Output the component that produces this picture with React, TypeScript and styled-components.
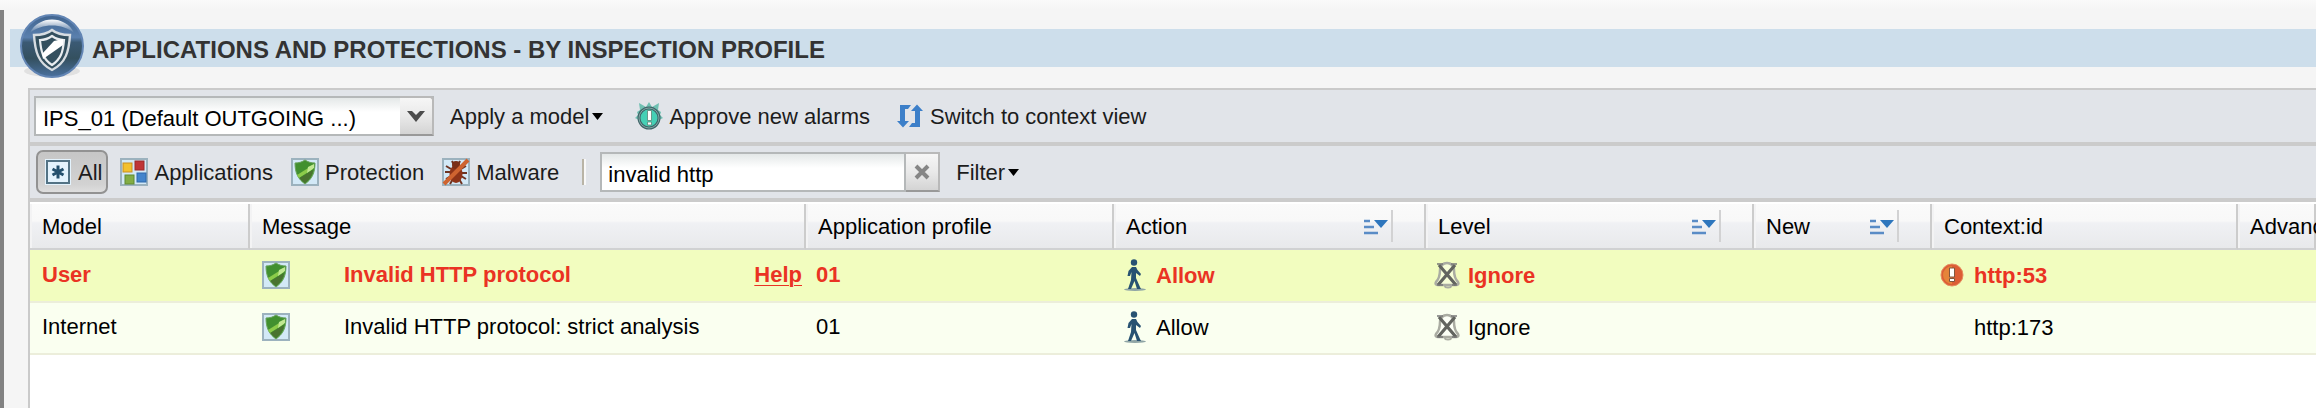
import React from 'react';
import styled, { createGlobalStyle, css } from 'styled-components';

const GlobalStyle = createGlobalStyle`
  *, *::before, *::after { box-sizing: border-box; }
  body {
    margin: 0;
    background: #f5f5f5;
    color: #000;
    font-family: "Liberation Sans", Arial, Helvetica, sans-serif;
    font-size: 22px;
    line-height: 26px;
  }
  button, input, select { font: inherit; color: inherit; }
  svg { display: block; flex: none; }
`;

const Page = styled.div`
  display: flex;
  flex-direction: column;
  min-height: 100vh;
  padding-top: 10px;
  overflow: hidden;
  background: linear-gradient(#fafafa, #f5f5f5 10px);
`;

const Frame = styled.div`
  display: flex;
  flex: 1;
  flex-direction: column;
  min-width: 0;
  border-left: 4px solid #828282;
`;

const TitleBar = styled.header`
  display: flex;
  align-items: center;
  gap: 8px;
  height: 72px;
  padding-left: 16px;
  background: linear-gradient(#cddeeb, #cddeeb) 6px 19px / 100% 38px no-repeat;
`;

const Title = styled.h1`
  margin: 0;
  padding-top: 7px;
  color: #333;
  font-size: 24px;
  line-height: 28px;
  white-space: nowrap;
`;

const Panel = styled.main`
  display: flex;
  flex: 1;
  flex-direction: column;
  min-width: 0;
  margin: 6px 0 0 24px;
  border: solid #cacaca;
  border-width: 2px 0 0 2px;
  background: #fff;
`;

const Toolbar = styled.div`
  display: flex;
  align-items: center;
  height: 56px;
  border-bottom: 4px solid #cbcbcb;
  background: #e1e4e9;
  color: #1c1c1c;
  white-space: nowrap;
`;

const MainToolbar = styled(Toolbar)`
  gap: 16px;
  padding-left: 4px;
`;

const FilterToolbar = styled(Toolbar)`
  gap: 4px;
  padding-left: 6px;
`;

const Label = styled.span`
  padding-top: 2px;
`;

const ToolButton = styled.button`
  display: flex;
  align-items: center;
  gap: 6px;
  height: 44px;
  padding: 0;
  border: 0;
  background: none;
`;

const MenuButton = styled(ToolButton)`
  gap: 3px;
`;

const ModelButton = styled(MenuButton)`
  margin-right: 16px;
`;

const SwitchButton = styled(ToolButton)`
  margin-left: 10px;
`;

const TypeButton = styled(ToolButton)<{ $active?: boolean }>`
  padding: 0 4px 0 6px;
  border: 2px solid transparent;
  border-radius: 7px;
  ${(p) =>
    p.$active &&
    css`
      border-color: #929292;
      background: linear-gradient(#c6c6c6, #d2d2d2 80%, #dedede);
    `}
`;

const fieldFace = css`
  height: 40px;
  border: 2px solid #b5b8b9;
  border-radius: 0;
  outline: none;
  background: linear-gradient(#e4e8e8, #fff 14px);
  color: #000;
`;

const raised = css`
  display: flex;
  align-items: center;
  justify-content: center;
  width: 34px;
  height: 40px;
  padding: 0;
  border: solid #b9b9b9;
  border-width: 2px 2px 2px 0;
  border-bottom-color: #999;
  background: linear-gradient(#f6f6f6, #e9e9e9 50%, #d4d4d4);
`;

const Combo = styled.div`
  display: grid;
  grid-template-columns: 366px 34px;
`;

const ProfileSelect = styled.select`
  ${fieldFace}
  grid-area: 1 / 1 / 2 / 3;
  width: 100%;
  padding: 5px 34px 0 7px;
  appearance: none;
`;

const ComboArrow = styled.span`
  ${raised}
  grid-area: 1 / 2;
  border-top-right-radius: 4px;
  pointer-events: none;
`;

const Divider = styled.span`
  width: 4px;
  height: 26px;
  margin: 0 10px 0 13px;
  border: solid;
  border-width: 0 2px;
  border-color: #b9b4a6 #f8f8f8 #f8f8f8 #b9b4a6;
`;

const Search = styled.div`
  display: flex;
  margin-right: 12px;
`;

const SearchInput = styled.input`
  ${fieldFace}
  width: 306px;
  padding: 5px 6px 0;
`;

const ClearButton = styled.button`
  ${raised}
`;

const Grid = styled.table`
  width: 100%;
  border-collapse: collapse;
  table-layout: fixed;
  white-space: nowrap;
`;

const Col = styled.col<{ $width?: number }>`
  width: ${(p) => (p.$width ? `${p.$width}px` : 'auto')};
`;

const HeadCell = styled.th`
  padding: 2px 0 0;
  overflow: hidden;
  font-weight: normal;
  text-align: left;
`;

const HeadFace = styled.div`
  display: flex;
  align-items: center;
  justify-content: space-between;
  height: 46px;
  padding-left: 12px;
  border-right: 2px solid #ccc;
  border-bottom: 2px solid #d0d1d2;
  box-shadow: inset 2px 0 #f3f3f4;
  background: linear-gradient(#fafafa, #f8f8f8 17px, #f0f1f4 19px, #e8e9eb);
`;

const SortButton = styled.button`
  height: 32px;
  margin-right: 31px;
  padding: 2px 2px 0 0;
  border: 0;
  border-right: 2px solid #d2d2d3;
  background: none;
`;

const Row = styled.tr<{ $custom?: boolean }>`
  height: 52px;
  border-bottom: 2px solid #eceedb;
  background: ${(p) => (p.$custom ? '#f2fdbf' : '#fafff0')};
  color: ${(p) => (p.$custom ? '#ea3323' : '#000')};
  font-weight: ${(p) => (p.$custom ? 'bold' : 'normal')};
`;

const Cell = styled.td<{ $inset?: number }>`
  padding: 0 4px 2px ${(p) => p.$inset ?? 12}px;
`;

const CellContent = styled.div<{ $gap: number }>`
  display: flex;
  align-items: center;
  gap: ${(p) => p.$gap}px;
`;

const IconSlot = styled.span`
  flex: none;
  width: 24px;
`;

const HelpLink = styled.a`
  margin-left: auto;
  color: inherit;
  text-decoration: underline;
  text-decoration-thickness: 1px;
  text-underline-offset: 3px;
`;

const Caret = () => (
  <svg width="11" height="7" viewBox="0 0 11 7" aria-hidden="true">
    <path d="M0 0h11L5.500 7z" fill="#000" />
  </svg>
);

const Badge = () => (
  <svg width="64" height="68" viewBox="0 0 64 68" aria-hidden="true">
    <defs>
      <linearGradient id="disc" x1="0" y1="0" x2="0" y2="1">
        <stop offset="0" stopColor="#40648f" />
        <stop offset="0.36" stopColor="#5a80ae" />
        <stop offset="0.44" stopColor="#3b5a74" />
        <stop offset="0.7" stopColor="#34505f" />
        <stop offset="1" stopColor="#4a719f" />
      </linearGradient>
      <linearGradient id="gloss" x1="0" y1="0" x2="0" y2="1">
        <stop offset="0" stopColor="#fff" />
        <stop offset="1" stopColor="#fff" stopOpacity="0" />
      </linearGradient>
    </defs>
    <ellipse cx="32" cy="59" rx="28" ry="6" fill="#000" opacity="0.08" />
    <circle cx="32" cy="34" r="31" fill="url(#disc)" stroke="#6285b4" strokeWidth="2" />
    <path d="M10 21C18 3 46 3 54 21 43 11 21 11 10 21z" fill="url(#gloss)" />
    <path
      d="M32 18c5 4 11 5 18 5-1 16-4 28-18 35-14-7-17-19-18-35 7 0 13-1 18-5z"
      fill="#34505f"
      stroke="#d7dde2"
      strokeWidth="2.4"
    />
    <path d="M32 24c4 3 8 4 12 4-1 12-3 19-12 25-9-6-11-13-12-25 4 0 8-1 12-4z" fill="none" stroke="#e9edf0" strokeWidth="2.2" />
    <path d="M22 42l1 5 20-14v-6l-9 2z" fill="#fff" />
  </svg>
);

const Chevron = () => (
  <svg width="18" height="11" viewBox="0 0 18 11" aria-hidden="true">
    <path d="M0 0h5l4 4 4-4h5L9 11z" fill="#4c4c4c" />
  </svg>
);

const AlarmIcon = () => (
  <svg width="28" height="28" viewBox="0 0 28 28" aria-hidden="true">
    <path
      d="M14 0l3 5 7-4-1 7 3 2-1 3 3 3-4 2-20 0-4-2 3-3-1-3 3-2-1-7 7 4z"
      fill="#6fc0b2"
    />
    <circle cx="14" cy="16" r="10" fill="#45d0b5" stroke="#3f6468" strokeWidth="3" />
    <circle cx="14" cy="16" r="10" fill="none" stroke="#7fa8a5" strokeWidth="1" />
    <path d="M12.500 8.500h4v10h-4zM12.500 20h4v3h-4z" fill="#fff" stroke="#5c8375" strokeWidth="0.800" />
  </svg>
);

const SwitchIcon = () => (
  <svg width="28" height="24" viewBox="0 0 28 24" aria-hidden="true">
    <path d="M4 1h11l-3 4H9v12h4l-6 6.500L1 17h3zM24 23H13l3-4h3V7h-4l6-6.500L27 7h-3z" fill="#3c7fc9" />
  </svg>
);

const TileFrame = () => (
  <rect x="1" y="1" width="26" height="26" fill="#d3e9f7" stroke="#9cb2be" strokeWidth="2" />
);

const AllIcon = () => (
  <svg width="28" height="28" viewBox="0 0 28 28" aria-hidden="true">
    <rect x="1" y="1" width="26" height="26" fill="#e4f3fd" />
    <rect x="3" y="3" width="22" height="22" fill="#e4f3fd" stroke="#537385" strokeWidth="2" />
    <path d="M14 7.500v13M8.500 11l11 6M19.500 11l-11 6" stroke="#24506d" strokeWidth="3" />
  </svg>
);

const ApplicationsIcon = () => (
  <svg width="28" height="28" viewBox="0 0 28 28" aria-hidden="true">
    <TileFrame />
    <rect x="3" y="5" width="9" height="9" fill="#f3c12f" stroke="#c98f22" />
    <rect x="15" y="3" width="9" height="9" fill="#bf3537" stroke="#9c2b2b" />
    <rect x="5" y="17" width="9" height="9" fill="#83ad45" stroke="#5f8a33" />
    <rect x="17" y="15" width="9" height="9" fill="#4384cc" stroke="#2f69ab" />
  </svg>
);

const ShieldIcon = () => (
  <svg width="28" height="28" viewBox="0 0 28 28" aria-hidden="true">
    <TileFrame />
    <path d="M14 2c3 2 6 3 10 3 0 10-3 16-10 21C7 21 4 15 4 5c4 0 7-1 10-3z" fill="#41902f" stroke="#69a35b" />
    <path d="M6 17L22 7v4L8 20z" fill="#8ccb4a" />
    <path d="M17 9l6-3v4l-7 5z" fill="#c0e892" />
    <path d="M8.500 20L22 12c-1 6-4 10-8 13-2-1-4-3-5.500-5z" fill="#49732f" />
  </svg>
);

const MalwareIcon = () => (
  <svg width="28" height="28" viewBox="0 0 28 28" aria-hidden="true">
    <TileFrame />
    <path
      d="M4 8l5 3M3 14h6M4 21l5-3M8 26l3-5M24 8l-5 3M25 15h-6M24 21l-5-3M20 26l-3-5M10 3l2 4M18 3l-2 4"
      fill="none"
      stroke="#6e3422"
      strokeWidth="2"
    />
    <ellipse cx="14" cy="16" rx="6.500" ry="9" fill="#8f3418" />
    <circle cx="14" cy="7" r="4" fill="#7a2f18" />
    <path d="M2 26L26 2" stroke="#cf6430" strokeWidth="4" />
  </svg>
);

const ClearIcon = () => (
  <svg width="16" height="16" viewBox="0 0 16 16" aria-hidden="true">
    <path d="M2 2l12 12M14 2L2 14" stroke="#858585" strokeWidth="4" />
  </svg>
);

const SortIcon = () => (
  <svg width="26" height="16" viewBox="0 0 26 16" aria-hidden="true">
    <path d="M1 2h6M1 8h10M1 14h14" stroke="#5a8cc6" strokeWidth="2.500" />
    <path d="M11 1h14l-7 8z" fill="#2e76bd" />
  </svg>
);

const WalkIcon = () => (
  <svg width="22" height="32" viewBox="0 0 22 32" aria-hidden="true">
    <ellipse cx="11" cy="30.500" rx="11" ry="1.500" fill="#8fa5a5" />
    <circle cx="10" cy="3.500" r="3.200" fill="#285272" />
    <path
      d="M8 8h4l1.500 3 3.500 4-1 2-4-3v5l4 9 1 2h-4l-2.500-8L7 30H4l3-9 .5-8L6 17H3.500l1-5z"
      fill="#285272"
    />
  </svg>
);

const IgnoreIcon = () => (
  <svg width="26" height="28" viewBox="0 0 26 28" aria-hidden="true">
    <path
      d="M13 2c4 0 7 3 7 7 0 6 1 9 4 12 1 2 0 3-2 3H4c-2 0-3-1-2-3 3-3 4-6 4-12 0-4 3-7 7-7z"
      fill="#fff"
      fillOpacity="0.400"
      stroke="#aaaca2"
      strokeWidth="2.500"
    />
    <path d="M11 25c0 2 6 2 6 0" fill="none" stroke="#aaaca2" strokeWidth="2" />
    <path d="M5 4l17 20M21 4L4 24" stroke="#62645f" strokeWidth="3.200" />
    <path d="M3 3h6M17 3h6M3 24h6M18 24h5" stroke="#777" strokeWidth="1.500" />
  </svg>
);

const WarnIcon = () => (
  <svg width="24" height="24" viewBox="0 0 24 24" aria-hidden="true">
    <circle cx="12" cy="12" r="11" fill="#dc5d35" stroke="#e78d60" />
    <path d="M12 3a9 9 0 0 0 0 18z" fill="#e5843a" />
    <path d="M9.500 5h5v9h-5zM9.500 15.500h5v3h-5z" fill="#fff" stroke="#80563f" strokeWidth="1" />
  </svg>
);

const columns: { label: string; width?: number; sortable?: boolean }[] = [
  { label: 'Model', width: 220 },
  { label: 'Message', width: 556 },
  { label: 'Application profile', width: 308 },
  { label: 'Action', width: 312, sortable: true },
  { label: 'Level', width: 328, sortable: true },
  { label: 'New', width: 178, sortable: true },
  { label: 'Context:id', width: 306 },
  { label: 'Advanced' },
];

const rows = [
  { model: 'User', message: 'Invalid HTTP protocol', profile: '01', action: 'Allow', level: 'Ignore', context: 'http:53', custom: true },
  { model: 'Internet', message: 'Invalid HTTP protocol: strict analysis', profile: '01', action: 'Allow', level: 'Ignore', context: 'http:173', custom: false },
];

export default function App() {
  return (
    <>
      <GlobalStyle />
      <Page>
        <Frame>
          <TitleBar>
            <Badge />
            <Title>APPLICATIONS AND PROTECTIONS - BY INSPECTION PROFILE</Title>
          </TitleBar>
          <Panel>
            <MainToolbar>
              <Combo>
                <ProfileSelect aria-label="Inspection profile">
                  <option>IPS_01 (Default OUTGOING ...)</option>
                </ProfileSelect>
                <ComboArrow>
                  <Chevron />
                </ComboArrow>
              </Combo>
              <ModelButton type="button">
                <Label>Apply a model</Label>
                <Caret />
              </ModelButton>
              <ToolButton type="button">
                <AlarmIcon />
                <Label>Approve new alarms</Label>
              </ToolButton>
              <SwitchButton type="button">
                <SwitchIcon />
                <Label>Switch to context view</Label>
              </SwitchButton>
            </MainToolbar>
            <FilterToolbar>
              <TypeButton type="button" $active aria-pressed="true">
                <AllIcon />
                <Label>All</Label>
              </TypeButton>
              <TypeButton type="button">
                <ApplicationsIcon />
                <Label>Applications</Label>
              </TypeButton>
              <TypeButton type="button">
                <ShieldIcon />
                <Label>Protection</Label>
              </TypeButton>
              <TypeButton type="button">
                <MalwareIcon />
                <Label>Malware</Label>
              </TypeButton>
              <Divider />
              <Search>
                <SearchInput type="text" aria-label="Search" defaultValue="invalid http" />
                <ClearButton type="button" aria-label="Clear search">
                  <ClearIcon />
                </ClearButton>
              </Search>
              <MenuButton type="button">
                <Label>Filter</Label>
                <Caret />
              </MenuButton>
            </FilterToolbar>
            <Grid>
              <colgroup>
                {columns.map((c) => (
                  <Col key={c.label} $width={c.width} />
                ))}
              </colgroup>
              <thead>
                <tr>
                  {columns.map((c) => (
                    <HeadCell key={c.label} scope="col">
                      <HeadFace>
                        <Label>{c.label}</Label>
                        {c.sortable && (
                          <SortButton type="button" aria-label={`Sort by ${c.label}`}>
                            <SortIcon />
                          </SortButton>
                        )}
                      </HeadFace>
                    </HeadCell>
                  ))}
                </tr>
              </thead>
              <tbody>
                {rows.map((r) => (
                  <Row key={r.model} $custom={r.custom}>
                    <Cell>{r.model}</Cell>
                    <Cell>
                      <CellContent $gap={54}>
                        <ShieldIcon />
                        {r.message}
                        {r.custom && <HelpLink href="#help">Help</HelpLink>}
                      </CellContent>
                    </Cell>
                    <Cell $inset={10}>{r.profile}</Cell>
                    <Cell $inset={10}>
                      <CellContent $gap={10}>
                        <WalkIcon />
                        <Label>{r.action}</Label>
                      </CellContent>
                    </Cell>
                    <Cell $inset={8}>
                      <CellContent $gap={8}>
                        <IgnoreIcon />
                        <Label>{r.level}</Label>
                      </CellContent>
                    </Cell>
                    <Cell />
                    <Cell $inset={8}>
                      <CellContent $gap={10}>
                        <IconSlot>{r.custom && <WarnIcon />}</IconSlot>
                        <Label>{r.context}</Label>
                      </CellContent>
                    </Cell>
                    <Cell />
                  </Row>
                ))}
              </tbody>
            </Grid>
          </Panel>
        </Frame>
      </Page>
    </>
  );
}
